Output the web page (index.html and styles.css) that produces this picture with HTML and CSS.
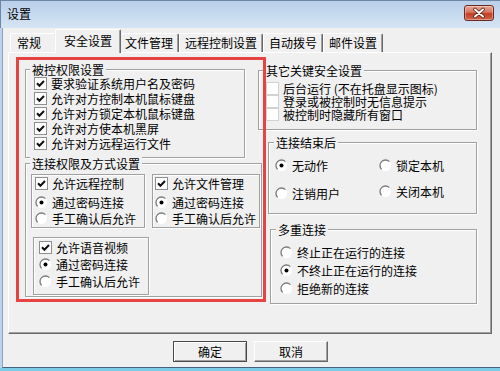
FILE: index.html
```html
<!DOCTYPE html>
<html lang="zh-CN">
<head>
	<meta charset="UTF-8">
	<title>设置</title>
	<link rel="stylesheet" href="styles.css">
</head>
<body>
	<div class="window">
		<div class="titlebar">
			<span class="title">设置</span>
			<span class="close-btn">
				<svg width="28" height="14" viewBox="0 0 28 14">
					<path d="M10 3.5L18 10.5M18 3.5L10 10.5" stroke="#5a1d12" stroke-width="3.6" stroke-linecap="round"/>
					<path d="M10 3.5L18 10.5M18 3.5L10 10.5" stroke="#fff" stroke-width="2" stroke-linecap="round"/>
				</svg>
			</span>
		</div>

		<div class="client">
			<div class="tabs">
				<div class="tab tab-first">常规</div>
				<div class="tab tab-active">安全设置</div>
				<div class="tab">文件管理</div>
				<div class="tab">远程控制设置</div>
				<div class="tab">自动拨号</div>
				<div class="tab">邮件设置</div>
			</div>

			<div class="panel">
				<div class="col-left">
					<div class="group g-perm">
						<span class="legend">被控权限设置</span>
						<div class="rows">
							<label class="row"><svg class="ctl" viewBox="0 0 13 13"><rect x=".5" y=".5" width="12" height="12" fill="#fff" stroke="#8f8f8f"/><path d="M3 6.3L5.4 8.8L10 4" fill="none" stroke="#111" stroke-width="2"/></svg>要求验证系统用户名及密码</label>
							<label class="row"><svg class="ctl" viewBox="0 0 13 13"><rect x=".5" y=".5" width="12" height="12" fill="#fff" stroke="#8f8f8f"/><path d="M3 6.3L5.4 8.8L10 4" fill="none" stroke="#111" stroke-width="2"/></svg>允许对方控制本机鼠标键盘</label>
							<label class="row"><svg class="ctl" viewBox="0 0 13 13"><rect x=".5" y=".5" width="12" height="12" fill="#fff" stroke="#8f8f8f"/><path d="M3 6.3L5.4 8.8L10 4" fill="none" stroke="#111" stroke-width="2"/></svg>允许对方锁定本机鼠标键盘</label>
							<label class="row"><svg class="ctl" viewBox="0 0 13 13"><rect x=".5" y=".5" width="12" height="12" fill="#fff" stroke="#8f8f8f"/><path d="M3 6.3L5.4 8.8L10 4" fill="none" stroke="#111" stroke-width="2"/></svg>允许对方使本机黑屏</label>
							<label class="row"><svg class="ctl" viewBox="0 0 13 13"><rect x=".5" y=".5" width="12" height="12" fill="#fff" stroke="#8f8f8f"/><path d="M3 6.3L5.4 8.8L10 4" fill="none" stroke="#111" stroke-width="2"/></svg>允许对方远程运行文件</label>
						</div>
					</div>

					<div class="group g-conn">
						<span class="legend">连接权限及方式设置</span>
						<div class="sub-row">
							<div class="subbox sb-remote">
								<label class="row row-cb"><svg class="ctl" viewBox="0 0 13 13"><rect x=".5" y=".5" width="12" height="12" fill="#fff" stroke="#8f8f8f"/><path d="M3 6.3L5.4 8.8L10 4" fill="none" stroke="#111" stroke-width="2"/></svg>允许远程控制</label>
								<label class="row row-rd first"><svg class="ctl" viewBox="0 0 13 13"><circle cx="6.5" cy="6.5" r="5.5" fill="#fff"/><path d="M2.6 10.4A5.5 5.5 0 0 1 10.4 2.6" fill="none" stroke="#7a7a7a" stroke-width="1.3"/><circle cx="6.5" cy="6.5" r="2" fill="#000"/></svg>通过密码连接</label>
								<label class="row row-rd"><svg class="ctl" viewBox="0 0 13 13"><circle cx="6.5" cy="6.5" r="5.5" fill="#fff"/><path d="M2.6 10.4A5.5 5.5 0 0 1 10.4 2.6" fill="none" stroke="#7a7a7a" stroke-width="1.3"/></svg>手工确认后允许</label>
							</div>
							<div class="subbox sb-file">
								<label class="row row-cb"><svg class="ctl" viewBox="0 0 13 13"><rect x=".5" y=".5" width="12" height="12" fill="#fff" stroke="#8f8f8f"/><path d="M3 6.3L5.4 8.8L10 4" fill="none" stroke="#111" stroke-width="2"/></svg>允许文件管理</label>
								<label class="row row-rd first"><svg class="ctl" viewBox="0 0 13 13"><circle cx="6.5" cy="6.5" r="5.5" fill="#fff"/><path d="M2.6 10.4A5.5 5.5 0 0 1 10.4 2.6" fill="none" stroke="#7a7a7a" stroke-width="1.3"/><circle cx="6.5" cy="6.5" r="2" fill="#000"/></svg>通过密码连接</label>
								<label class="row row-rd"><svg class="ctl" viewBox="0 0 13 13"><circle cx="6.5" cy="6.5" r="5.5" fill="#fff"/><path d="M2.6 10.4A5.5 5.5 0 0 1 10.4 2.6" fill="none" stroke="#7a7a7a" stroke-width="1.3"/></svg>手工确认后允许</label>
							</div>
						</div>
						<div class="subbox sb-voice">
							<label class="row row-cb"><svg class="ctl" viewBox="0 0 13 13"><rect x=".5" y=".5" width="12" height="12" fill="#fff" stroke="#8f8f8f"/><path d="M3 6.3L5.4 8.8L10 4" fill="none" stroke="#111" stroke-width="2"/></svg>允许语音视频</label>
							<label class="row row-rd first"><svg class="ctl" viewBox="0 0 13 13"><circle cx="6.5" cy="6.5" r="5.5" fill="#fff"/><path d="M2.6 10.4A5.5 5.5 0 0 1 10.4 2.6" fill="none" stroke="#7a7a7a" stroke-width="1.3"/><circle cx="6.5" cy="6.5" r="2" fill="#000"/></svg>通过密码连接</label>
							<label class="row row-rd"><svg class="ctl" viewBox="0 0 13 13"><circle cx="6.5" cy="6.5" r="5.5" fill="#fff"/><path d="M2.6 10.4A5.5 5.5 0 0 1 10.4 2.6" fill="none" stroke="#7a7a7a" stroke-width="1.3"/></svg>手工确认后允许</label>
						</div>
					</div>
				</div>

				<div class="col-right">
					<div class="group g-other">
						<span class="legend">其它关键安全设置</span>
						<div class="rows">
							<label class="row"><svg class="ctl" viewBox="0 0 13 13"><rect x=".5" y=".5" width="12" height="12" fill="#fff" stroke="#d2d2d2"/></svg>后台运行 (不在托盘显示图标)</label>
							<label class="row"><svg class="ctl" viewBox="0 0 13 13"><rect x=".5" y=".5" width="12" height="12" fill="#fff" stroke="#d2d2d2"/></svg>登录或被控制时无信息提示</label>
							<label class="row"><svg class="ctl" viewBox="0 0 13 13"><rect x=".5" y=".5" width="12" height="12" fill="#fff" stroke="#d2d2d2"/></svg>被控制时隐藏所有窗口</label>
						</div>
					</div>

					<div class="group g-end">
						<span class="legend">连接结束后</span>
						<div class="end-grid">
							<div class="end-col col-a">
								<label class="row"><svg class="ctl" viewBox="0 0 13 13"><circle cx="6.5" cy="6.5" r="5.5" fill="#fff"/><path d="M2.6 10.4A5.5 5.5 0 0 1 10.4 2.6" fill="none" stroke="#7a7a7a" stroke-width="1.3"/><circle cx="6.5" cy="6.5" r="2" fill="#000"/></svg>无动作</label>
								<label class="row"><svg class="ctl" viewBox="0 0 13 13"><circle cx="6.5" cy="6.5" r="5.5" fill="#fff"/><path d="M2.6 10.4A5.5 5.5 0 0 1 10.4 2.6" fill="none" stroke="#7a7a7a" stroke-width="1.3"/></svg>注销用户</label>
							</div>
							<div class="end-col col-b">
								<label class="row"><svg class="ctl" viewBox="0 0 13 13"><circle cx="6.5" cy="6.5" r="5.5" fill="#fff"/><path d="M2.6 10.4A5.5 5.5 0 0 1 10.4 2.6" fill="none" stroke="#7a7a7a" stroke-width="1.3"/></svg>锁定本机</label>
								<label class="row"><svg class="ctl" viewBox="0 0 13 13"><circle cx="6.5" cy="6.5" r="5.5" fill="#fff"/><path d="M2.6 10.4A5.5 5.5 0 0 1 10.4 2.6" fill="none" stroke="#7a7a7a" stroke-width="1.3"/></svg>关闭本机</label>
							</div>
						</div>
					</div>

					<div class="group g-multi">
						<span class="legend">多重连接</span>
						<div class="rows">
							<label class="row"><svg class="ctl" viewBox="0 0 13 13"><circle cx="6.5" cy="6.5" r="5.5" fill="#fff"/><path d="M2.6 10.4A5.5 5.5 0 0 1 10.4 2.6" fill="none" stroke="#7a7a7a" stroke-width="1.3"/></svg>终止正在运行的连接</label>
							<label class="row"><svg class="ctl" viewBox="0 0 13 13"><circle cx="6.5" cy="6.5" r="5.5" fill="#fff"/><path d="M2.6 10.4A5.5 5.5 0 0 1 10.4 2.6" fill="none" stroke="#7a7a7a" stroke-width="1.3"/><circle cx="6.5" cy="6.5" r="2" fill="#000"/></svg>不终止正在运行的连接</label>
							<label class="row"><svg class="ctl" viewBox="0 0 13 13"><circle cx="6.5" cy="6.5" r="5.5" fill="#fff"/><path d="M2.6 10.4A5.5 5.5 0 0 1 10.4 2.6" fill="none" stroke="#7a7a7a" stroke-width="1.3"/></svg>拒绝新的连接</label>
						</div>
					</div>
				</div>

				<!-- красная рамка-выделение поверх левой колонки -->
				<div class="mark"></div>
			</div>

			<div class="buttons">
				<span class="btn btn-default">确定</span>
				<span class="btn">取消</span>
			</div>
		</div>
	</div>
</body>
</html>
```

FILE: styles.css
```css
body {
	margin: 0;
	font-family: "Noto Sans CJK SC", "Liberation Sans", sans-serif;
	font-size: 12px;
	color: #000;
	background: #f0f0f0;
	overflow: hidden;
}

.window {
	width: 500px;
	height: 371px;
	box-sizing: border-box;
	display: flex;
	flex-direction: column;
	background: #bcd3eb;
	border-bottom: 3px solid #7ccbe7;
}

/* Заголовок окна */
.titlebar {
	height: 28px;
	flex: none;
	display: flex;
	align-items: flex-start;
	box-sizing: border-box;
	border-top: 1px solid #6d88a6;
	border-left: 1px solid #6d88a6;
	background: linear-gradient(#bad0e9, #c9dcf0 60%, #d6e5f4);
}

.title {
	line-height: 26px;
	padding-left: 6px;
}

.close-btn {
	margin: 4px 6px 0 auto;
	width: 30px;
	height: 16px;
	box-sizing: border-box;
	border: 1px solid #6b2a1f;
	border-radius: 3px;
	background: linear-gradient(#e9a896, #d6735c 45%, #c23d24 55%, #d0674d);
	box-shadow: inset 0 0 0 1px rgba(255, 255, 255, 0.35);
	display: flex;
}

/* Клиентская область */
.client {
	flex: 1;
	margin-left: 2px;
	display: flex;
	flex-direction: column;
	background: #f0f0f0;
	border-left: 1px solid #8aa4c0;
	border-bottom: 1px solid #44607f;
}

.tabs {
	height: 24px;
	flex: none;
	display: flex;
	align-items: flex-end;
	margin-left: 7px;
}

.tab {
	height: 19px;
	box-sizing: border-box;
	line-height: 18px;
	padding: 0 5px;
	white-space: nowrap;
	background: #f0f0f0;
	border-top: 1px solid #fff;
	border-left: 1px solid #fff;
	border-right: 1px solid #696969;
	border-radius: 2px 2px 0 0;
	box-shadow: inset -1px 0 #a0a0a0;
}

.tab-first {
	width: 47px;
	padding-left: 6px;
}

.tab-active {
	position: relative;
	z-index: 1;
	height: 24px;
	line-height: 22px;
	padding: 0 8px;
	margin: 0 -2px -1px -2px;
}

.panel {
	position: relative;
	height: 282px;
	box-sizing: border-box;
	margin: 0 8px 0 5px;
	padding-left: 16px;
	display: flex;
	border-top: 1px solid #fff;
	border-left: 1px solid #fff;
	border-right: 1px solid #696969;
	border-bottom: 1px solid #696969;
	box-shadow: inset -1px -1px #a0a0a0;
}

.col-left {
	width: 233px;
	flex: none;
	display: flex;
	flex-direction: column;
}

.col-right {
	flex: 1;
	display: flex;
	flex-direction: column;
}

/* Группы */
.group {
	box-sizing: border-box;
	border: 1px solid #a0a0a0;
	box-shadow: 1px 1px 0 #fff, inset 1px 1px 0 #fff;
	display: flex;
	flex-direction: column;
	flex: none;
}

.legend {
	align-self: flex-start;
	margin: -7px 0 0 4px;
	padding: 0 2px;
	line-height: 13px;
	background: #f0f0f0;
	white-space: nowrap;
}

.row {
	display: flex;
	align-items: center;
	gap: 4px;
	white-space: nowrap;
}

.ctl {
	width: 13px;
	height: 13px;
	flex: none;
}

.g-perm {
	width: 220px;
	height: 89px;
	margin-top: 16px;
}

.g-perm .rows {
	padding-left: 8px;
}

.g-perm .row {
	height: 15px;
}

.g-conn {
	width: 237px;
	height: 134px;
	margin-top: 5px;
}

.sub-row {
	display: flex;
	gap: 7px;
	margin: 4px 0 0 5px;
}

.subbox {
	box-sizing: border-box;
	border: 1px solid #a0a0a0;
	box-shadow: 1px 1px 0 #fff, inset 1px 1px 0 #fff;
	padding-left: 3px;
	height: 54px;
}

.subbox .row-cb {
	height: 16px;
}

.subbox .row-rd {
	height: 16px;
}

.subbox .row-rd.first {
	margin-top: 3px;
}

.sb-remote {
	width: 114px;
}

.sb-file {
	width: 108px;
	padding-left: 2px;
}

.sb-voice {
	width: 116px;
	height: 58px;
	margin: 9px 0 0 7px;
	padding: 1px 0 0 5px;
}

.sb-voice .row-rd {
	height: 17px;
}

.sb-voice .row-rd.first {
	margin-top: 1px;
}

.g-other {
	width: 219px;
	height: 60px;
	margin-top: 17px;
}

.g-other .legend {
	margin-left: 5px;
}

.g-other .rows {
	margin-top: 5px;
	padding-left: 7px;
}

.g-other .row {
	height: 13px;
}

.g-end {
	width: 209px;
	height: 72px;
	margin: 12px 0 0 10px;
}

.g-end .legend {
	margin-left: 5px;
}

.end-grid {
	display: flex;
	margin-top: 8px;
	padding-left: 6px;
}

.end-col {
	display: flex;
	flex-direction: column;
}

.end-col .row {
	height: 16px;
}

.col-a {
	width: 104px;
	gap: 12px;
}

.col-b {
	gap: 10px;
}

.g-multi {
	width: 207px;
	height: 75px;
	margin: 15px 0 0 12px;
}

.g-multi .legend {
	margin-left: 5px;
}

.g-multi .rows {
	display: flex;
	flex-direction: column;
	gap: 2px;
	margin-top: 8px;
	padding-left: 9px;
}

.g-multi .row {
	height: 16px;
}

.mark {
	position: absolute;
	left: 7px;
	top: 4px;
	width: 250px;
	height: 245px;
	box-sizing: border-box;
	border: 3px solid #e64343;
}

/* Кнопки */
.buttons {
	display: flex;
	justify-content: center;
	gap: 7px;
	margin-top: 7px;
	padding-right: 2px;
}

.btn {
	width: 74px;
	height: 21px;
	box-sizing: border-box;
	display: flex;
	align-items: center;
	justify-content: center;
	background: #f0f0f0;
	border-top: 1px solid #fff;
	border-left: 1px solid #fff;
	border-right: 1px solid #696969;
	border-bottom: 1px solid #696969;
	box-shadow: inset -1px -1px #a0a0a0;
}

.btn-default {
	border: 1px solid #4a4a4a;
	box-shadow: inset 1px 1px #fff, inset -1px -1px #a0a0a0;
}
```
